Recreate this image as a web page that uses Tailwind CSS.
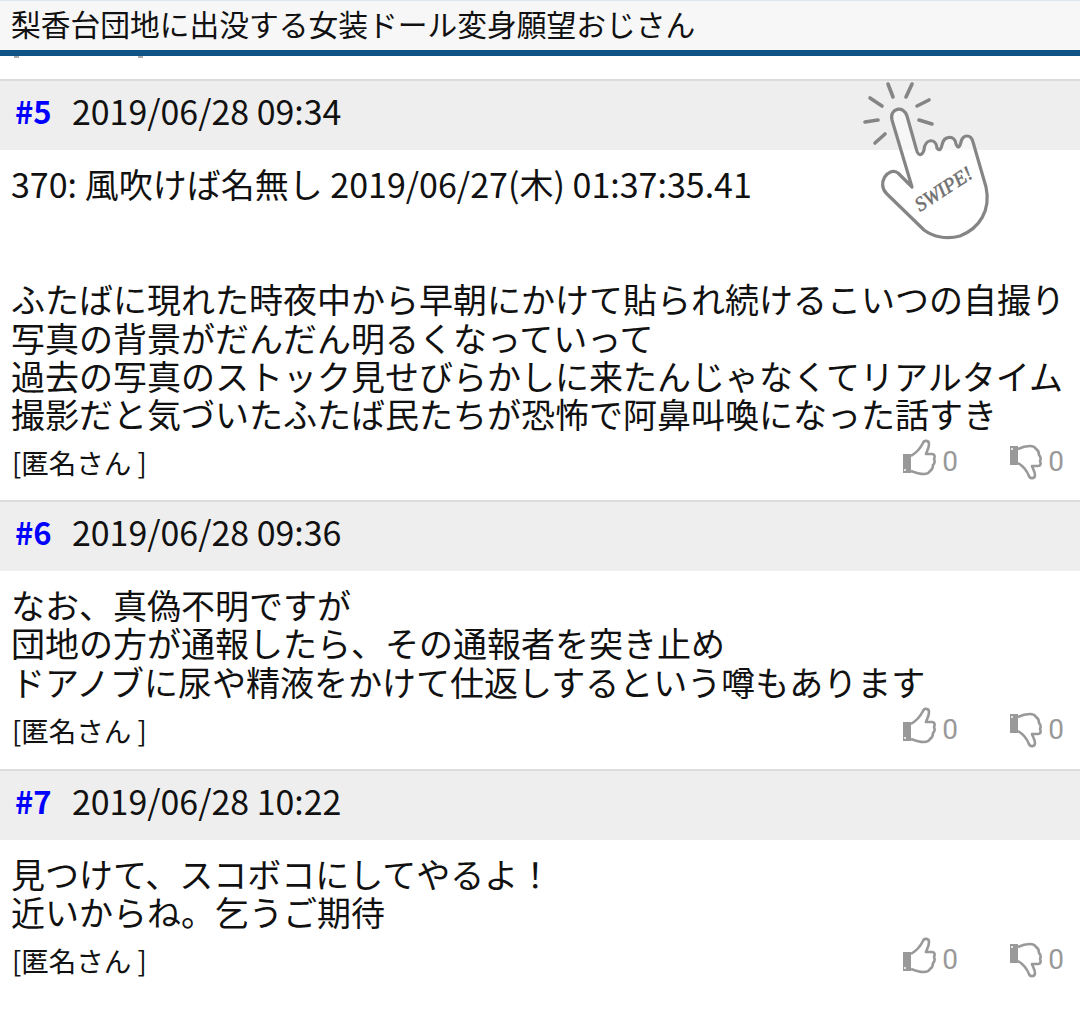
<!DOCTYPE html>
<html lang="ja"><head><meta charset="utf-8"><script src="https://cdn.jsdelivr.net/npm/@tailwindcss/browser@4"></script></head>
<body class="bg-white overflow-hidden font-['Noto_Sans_CJK_JP','Noto_Sans',sans-serif] text-[#111]">
<div class="w-[1080px] h-[1015px] relative overflow-hidden">
<div class="h-[56px] bg-[#f7f7f7] border-t border-[#dfe6f2] border-b-[6px] border-b-[#0f5284] pl-[11px] text-[29.75px] leading-[45px] whitespace-nowrap">梨香台団地に出没する女装ドール変身願望おじさん</div>
<div class="h-[23px] relative"><i class="absolute left-[14px] top-0 w-[5px] h-[2px] bg-[#aaa]"></i><i class="absolute left-[138px] top-0 w-[5px] h-[2px] bg-[#aaa]"></i></div>

<section class="h-[421px] border-t-2 border-[#dcdcdc] flex flex-col">
<div class="h-[69px] shrink-0 bg-[#eeeeee] flex items-center pb-[10px] pl-[15px] text-[33.9px] leading-[50px]"><b class="text-[#0000ff] w-[57px] text-[31px]">#5</b><span>2019/06/28 09:34</span></div>
<div class="pl-[11px] pt-[15px] text-[34px] leading-[38.4px] whitespace-nowrap">370: 風吹けば名無し 2019/06/27(木) 01:37:35.41<br><br><br>ふたばに現れた時夜中から早朝にかけて貼られ続けるこいつの自撮り<br>写真の背景がだんだん明るくなっていって<br>過去の写真のストック見せびらかしに来たんじゃなくてリアルタイム<br>撮影だと気づいたふたば民たちが恐怖で阿鼻叫喚になった話すき</div>
<div class="flex items-center justify-between pl-[12px] pr-[16px] mt-[3px] text-[27.5px] leading-[50px]"><span>[匿名さん ]</span>
<div class="flex items-center text-[#999] text-[28px] font-['Roboto',sans-serif]">
<svg class="w-[34px] h-[38px] mb-[8px]" viewBox="0 0 34 38"><path d="M1 15h8v19H1z" fill="#999"/><circle cx="3" cy="31" r="1" fill="#fff"/><path d="M9 17c5-3 9-7 12-13 1-3 6-3 6 1 0 4-2 7-3 10h6c3 0 3 3 2 5 1 2 1 4-1 6 0 3-1 5-3 6-1 2-3 3-6 3-5 0-8-1-13-3" fill="none" stroke="#999" stroke-width="2.6" stroke-linejoin="round"/></svg>
<span class="ml-[6px] w-[66px]">0</span>
<svg class="w-[34px] h-[38px]" viewBox="0 0 34 38"><path d="M2 3h8v19H2z" fill="#999"/><circle cx="4" cy="6" r="1" fill="#fff"/><path d="M10 20c5 3 9 8 11 13 1 3 6 3 6-1 0-3-2-6-3-9h6c3 0 3-3 2-5 1-2 1-4-1-6 0-3-1-5-3-6-1-2-3-3-6-3-5 0-8 1-12 3" fill="none" stroke="#999" stroke-width="2.6" stroke-linejoin="round"/></svg>
<span class="ml-[6px]">0</span>
</div></div>
</section>

<section class="h-[269px] border-t-2 border-[#dcdcdc] flex flex-col">
<div class="h-[69px] shrink-0 bg-[#eeeeee] flex items-center pb-[10px] pl-[15px] text-[33.9px] leading-[50px]"><b class="text-[#0000ff] w-[57px] text-[31px]">#6</b><span>2019/06/28 09:36</span></div>
<div class="pl-[11px] pt-[15px] text-[34px] leading-[38.4px] whitespace-nowrap">なお、真偽不明ですが<br>団地の方が通報したら、その通報者を突き止め<br>ドアノブに尿や精液をかけて仕返しするという噂もあります</div>
<div class="flex items-center justify-between pl-[12px] pr-[16px] mt-[4px] text-[27.5px] leading-[50px]"><span>[匿名さん ]</span>
<div class="flex items-center text-[#999] text-[28px] font-['Roboto',sans-serif]">
<svg class="w-[34px] h-[38px] mb-[8px]" viewBox="0 0 34 38"><path d="M1 15h8v19H1z" fill="#999"/><circle cx="3" cy="31" r="1" fill="#fff"/><path d="M9 17c5-3 9-7 12-13 1-3 6-3 6 1 0 4-2 7-3 10h6c3 0 3 3 2 5 1 2 1 4-1 6 0 3-1 5-3 6-1 2-3 3-6 3-5 0-8-1-13-3" fill="none" stroke="#999" stroke-width="2.6" stroke-linejoin="round"/></svg>
<span class="ml-[6px] w-[66px]">0</span>
<svg class="w-[34px] h-[38px]" viewBox="0 0 34 38"><path d="M2 3h8v19H2z" fill="#999"/><circle cx="4" cy="6" r="1" fill="#fff"/><path d="M10 20c5 3 9 8 11 13 1 3 6 3 6-1 0-3-2-6-3-9h6c3 0 3-3 2-5 1-2 1-4-1-6 0-3-1-5-3-6-1-2-3-3-6-3-5 0-8 1-12 3" fill="none" stroke="#999" stroke-width="2.6" stroke-linejoin="round"/></svg>
<span class="ml-[6px]">0</span>
</div></div>
</section>

<section class="border-t-2 border-[#dcdcdc] flex flex-col">
<div class="h-[69px] shrink-0 bg-[#eeeeee] flex items-center pb-[10px] pl-[15px] text-[33.9px] leading-[50px]"><b class="text-[#0000ff] w-[57px] text-[31px]">#7</b><span>2019/06/28 10:22</span></div>
<div class="pl-[11px] pt-[15px] text-[34px] leading-[38.4px] whitespace-nowrap">見つけて、スコボコにしてやるよ！<br>近いからね。乞うご期待</div>
<div class="flex items-center justify-between pl-[12px] pr-[16px] mt-[3px] text-[27.5px] leading-[50px]"><span>[匿名さん ]</span>
<div class="flex items-center text-[#999] text-[28px] font-['Roboto',sans-serif]">
<svg class="w-[34px] h-[38px] mb-[8px]" viewBox="0 0 34 38"><path d="M1 15h8v19H1z" fill="#999"/><circle cx="3" cy="31" r="1" fill="#fff"/><path d="M9 17c5-3 9-7 12-13 1-3 6-3 6 1 0 4-2 7-3 10h6c3 0 3 3 2 5 1 2 1 4-1 6 0 3-1 5-3 6-1 2-3 3-6 3-5 0-8-1-13-3" fill="none" stroke="#999" stroke-width="2.6" stroke-linejoin="round"/></svg>
<span class="ml-[6px] w-[66px]">0</span>
<svg class="w-[34px] h-[38px]" viewBox="0 0 34 38"><path d="M2 3h8v19H2z" fill="#999"/><circle cx="4" cy="6" r="1" fill="#fff"/><path d="M10 20c5 3 9 8 11 13 1 3 6 3 6-1 0-3-2-6-3-9h6c3 0 3-3 2-5 1-2 1-4-1-6 0-3-1-5-3-6-1-2-3-3-6-3-5 0-8 1-12 3" fill="none" stroke="#999" stroke-width="2.6" stroke-linejoin="round"/></svg>
<span class="ml-[6px]">0</span>
</div></div>
</section>

<svg class="absolute left-[840px] top-[60px] w-[240px] h-[200px]" viewBox="0 0 240 200" fill="none" stroke="#858585" stroke-linecap="round" stroke-linejoin="round">
<g stroke-width="3.6"><path d="M48 24l5 13M72 24l-6 13M30 38l12 8M89 40l-12 6M25 62l13-2M79 60l13 4M35 83l10-9"/></g>
<path stroke-width="3.2" fill="#fff" fill-opacity=".55" d="M72 127L52 60C49 48 64 45 67 56L76 88C78 97 82 96 84 90C85 78 96 78 97 88C99 91 101 90 102 85C104 75 115 75 116 84C118 89 120 87 121 82C123 74 131 74 133 82L146 127C151 150 140 168 120 176C105 180 92 176 84 170L47 134C36 124 48 106 58 113Z"/>
<text transform="translate(80 152) rotate(-33)" font-family="Liberation Serif" font-style="italic" font-size="20" fill="#707070" stroke="#707070" stroke-width=".5">SWIPE!</text>
</svg>
</div>
</body></html>
